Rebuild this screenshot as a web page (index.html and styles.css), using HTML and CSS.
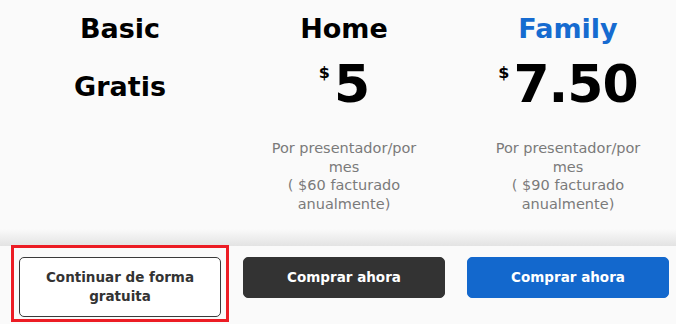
FILE: index.html
```html
<!DOCTYPE html>
<html lang="es">
<head>
<meta charset="utf-8">
<title>Planes</title>
<link rel="stylesheet" href="styles.css">
</head>
<body>
<div class="page">
  <section class="plans">
    <div class="plan">
      <h2 class="name">Basic</h2>
      <div class="price"><span class="free">Gratis</span></div>
    </div>
    <div class="plan">
      <h2 class="name">Home</h2>
      <div class="price"><span class="cur">$</span><span class="amount">5</span></div>
      <p class="desc">Por presentador/por<br>mes<br>( $60 facturado<br>anualmente)</p>
    </div>
    <div class="plan">
      <h2 class="name name-blue">Family</h2>
      <div class="price"><span class="cur">$</span><span class="amount">7.50</span></div>
      <p class="desc">Por presentador/por<br>mes<br>( $90 facturado<br>anualmente)</p>
    </div>
  </section>
  <section class="actions">
    <div class="cell">
      <button class="btn btn-outline">Continuar de forma<br>gratuita</button>
      <span class="highlight"></span>
    </div>
    <div class="cell">
      <button class="btn btn-dark">Comprar ahora</button>
    </div>
    <div class="cell">
      <button class="btn btn-blue">Comprar ahora</button>
    </div>
  </section>
</div>
</body>
</html>
```

FILE: styles.css
```css
html, body {
  margin: 0;
  padding: 0;
  background: #fafafa;
  overflow: hidden;
}

body {
  font-family: "DejaVu Sans", sans-serif;
  color: #000;
}

.page {
  width: 676px;
  height: 324px;
  overflow: hidden;
}

.plans {
  display: grid;
  grid-template-columns: 224px 224px 224px;
  padding-left: 8px;
  height: 246px;
  box-sizing: border-box;
  background: linear-gradient(to bottom, #fafafa 0, #fafafa 229px, #e3e3e3 246px);
}

.plan {
  display: flex;
  flex-direction: column;
  align-items: center;
  text-align: center;
}

.name {
  margin: 11px 0 0;
  height: 36px;
  line-height: 36px;
  font-size: 27px;
  font-weight: bold;
}

.name-blue {
  color: #166bd0;
}

.price {
  margin-top: 9px;
  height: 56px;
  display: flex;
  justify-content: center;
  align-items: flex-start;
}

.free {
  font-size: 27px;
  font-weight: bold;
  line-height: 56px;
  padding-top: 3px;
}

.cur {
  font-size: 16px;
  font-weight: bold;
  line-height: 20px;
  margin-top: 7px;
  margin-right: 4px;
}

.amount {
  font-size: 52px;
  font-weight: bold;
  line-height: 56px;
  letter-spacing: -1px;
}

.desc {
  margin: 27px 0 0;
  font-size: 14.5px;
  line-height: 18.7px;
  color: #7a7a7a;
}

.actions {
  display: grid;
  grid-template-columns: 224px 224px 224px;
  padding-left: 8px;
  padding-top: 11px;
  align-items: start;
}

.cell {
  position: relative;
  padding: 0 11px;
}

.btn {
  display: block;
  width: 100%;
  box-sizing: border-box;
  padding: 10px 8px;
  border-radius: 5px;
  border: 1px solid transparent;
  font-family: "DejaVu Sans", sans-serif;
  font-size: 13.5px;
  font-weight: bold;
  line-height: 19px;
  text-align: center;
}

.btn-outline {
  background: #fff;
  border-color: #3a3a3a;
  color: #333;
}

.btn-dark {
  background: #333;
  border-color: #333;
  color: #fff;
}

.btn-blue {
  background: #1368cd;
  border-color: #1368cd;
  color: #fff;
}

.highlight {
  position: absolute;
  left: 3px;
  right: 3px;
  top: -12px;
  bottom: -5px;
  border: 3px solid #ec1c24;
  pointer-events: none;
}
```
